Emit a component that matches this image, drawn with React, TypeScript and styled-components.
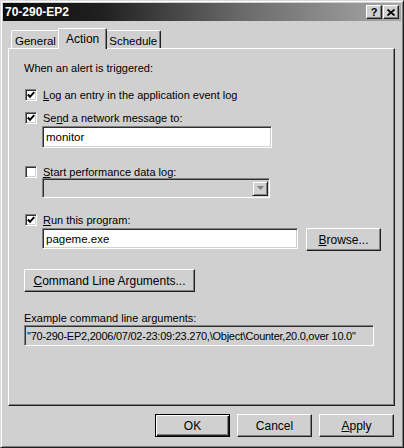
import styled, { createGlobalStyle } from "styled-components";

const FACE = "#d0d0d0";

const GlobalStyle = createGlobalStyle`
  html, body {
    margin: 0;
    padding: 0;
    background: ${FACE};
  }
  body {
    font-family: "Liberation Sans", Arial, sans-serif;
    font-size: 11px;
    color: #000;
  }
`;

const Window = styled.div`
  width: 404px;
  height: 448px;
  box-sizing: border-box;
  background: ${FACE};
  border: 1px solid;
  border-color: #d8d8d8 #202020 #202020 #d8d8d8;
  box-shadow: inset 1px 1px #fff, inset -1px -1px #808080;
  padding: 2px;
  display: flex;
  flex-direction: column;
`;

const TitleBar = styled.div`
  height: 18px;
  display: flex;
  align-items: center;
  padding: 0 2px 0 2px;
  background: linear-gradient(90deg, #0c0c0c 0%, #202020 25%, #6a6a6a 60%, #a8a8a8 100%);
`;

const Title = styled.div`
  flex: 1;
  color: #fff;
  font-weight: bold;
  font-size: 12px;
`;

const CaptionButton = styled.div<{ $gap?: number }>`
  width: 16px;
  height: 14px;
  box-sizing: border-box;
  margin-left: ${(p) => p.$gap ?? 0}px;
  background: ${FACE};
  border: 1px solid;
  border-color: #fff #202020 #202020 #fff;
  box-shadow: inset -1px -1px #808080;
  display: flex;
  align-items: center;
  justify-content: center;
  font-weight: bold;
  font-size: 11px;
  line-height: 1;
`;

const Body = styled.div`
  flex: 1;
  display: flex;
  flex-direction: column;
  padding: 8px 6px 0 5px;
`;

const TabStrip = styled.div`
  display: flex;
  align-items: flex-end;
  padding-left: 3px;
  height: 20px;
  position: relative;
  z-index: 1;
  margin-bottom: -1px;
`;

const Tab = styled.div<{ $active?: boolean }>`
  box-sizing: border-box;
  height: ${(p) => (p.$active ? 21 : 18)}px;
  padding: ${(p) => (p.$active ? "0 7px 1px 7px" : "2px 3px 0 3px")};
  margin: ${(p) => (p.$active ? "0 -2px" : "0 0 1px 0")};
  background: ${FACE};
  border-top: 1px solid #fff;
  border-left: 1px solid #fff;
  border-right: 1px solid #202020;
  border-radius: 2px 2px 0 0;
  box-shadow: inset -1px 0 #808080;
  position: relative;
  z-index: ${(p) => (p.$active ? 2 : 1)};
  display: flex;
  align-items: center;
  font-size: ${(p) => (p.$active ? 12 : 11.5)}px;
`;

const Panel = styled.div`
  height: 358px;
  box-sizing: border-box;
  border: 1px solid;
  border-color: #fff #202020 #202020 #fff;
  box-shadow: inset -1px -1px #808080;
  padding: 13px 0 0 15px;
  display: flex;
  flex-direction: column;
  align-items: flex-start;
`;

const Caption = styled.div<{ $mt?: number }>`
  margin-top: ${(p) => p.$mt ?? 0}px;
  line-height: 13px;
  height: 13px;
`;

const CheckRow = styled.div<{ $mt: number }>`
  margin-top: ${(p) => p.$mt}px;
  height: 13px;
  display: flex;
  align-items: center;
  gap: 6px;
  padding-left: 1px;
`;

const Box = styled.div`
  width: 12px;
  height: 12px;
  box-sizing: border-box;
  background: #fff;
  border: 1px solid;
  border-color: #808080 #fff #fff #808080;
  box-shadow: inset 1px 1px #303030, inset -1px -1px ${FACE};
  display: flex;
  align-items: center;
  justify-content: center;
`;

const Indented = styled.div<{ $mt: number }>`
  margin-top: ${(p) => p.$mt}px;
  margin-left: 18px;
  display: flex;
  gap: 8px;
`;

const Field = styled.div<{ $w: number; $h: number; $disabled?: boolean; $tight?: boolean }>`
  width: ${(p) => p.$w}px;
  height: ${(p) => p.$h}px;
  box-sizing: border-box;
  background: ${(p) => (p.$disabled ? FACE : "#fff")};
  border: 1px solid;
  border-color: #808080 #fff #fff #808080;
  box-shadow: inset 1px 1px #303030, inset -1px -1px ${FACE};
  display: flex;
  align-items: center;
  padding: 0 ${(p) => (p.$tight ? 2 : 3)}px;
  white-space: nowrap;
  overflow: hidden;
  font-size: ${(p) => (p.$tight ? 11 : 11.5)}px;
  letter-spacing: ${(p) => (p.$tight ? "-0.25px" : "0")};
`;

const ComboArrow = styled.div`
  margin-left: auto;
  margin-right: -2px;
  width: 16px;
  height: 15px;
  box-sizing: border-box;
  background: ${FACE};
  border: 1px solid;
  border-color: ${FACE} #202020 #202020 ${FACE};
  box-shadow: inset 1px 1px #fff, inset -1px -1px #808080;
  display: flex;
  align-items: center;
  justify-content: center;
`;

const Button = styled.div<{ $w: number; $default?: boolean; $mt?: number }>`
  width: ${(p) => p.$w}px;
  height: 23px;
  margin-top: ${(p) => p.$mt ?? 0}px;
  box-sizing: border-box;
  background: ${FACE};
  border: 1px solid;
  border-color: ${(p) =>
    p.$default ? "#000" : "#fff #202020 #202020 #fff"};
  box-shadow: ${(p) =>
    p.$default
      ? "inset 1px 1px #fff, inset -1px -1px #202020, inset -2px -2px #808080"
      : "inset -1px -1px #808080"};
  display: flex;
  align-items: center;
  justify-content: center;
  font-size: 12px;
`;

const Footer = styled.div`
  display: flex;
  justify-content: flex-end;
  gap: 7px;
  margin-top: 8px;
  padding-right: 1px;
`;

function Check({ on }: { on: boolean }) {
  return (
    <Box>
      {on && (
        <svg width="8" height="8" viewBox="0 0 8 8">
          <path d="M0.8 3.5 L3 5.8 L7.2 1.2" stroke="#000" strokeWidth="2" fill="none" />
        </svg>
      )}
    </Box>
  );
}

export default function App() {
  return (
    <>
      <GlobalStyle />
      <Window>
        <TitleBar>
          <Title>70-290-EP2</Title>
          <CaptionButton>?</CaptionButton>
          <CaptionButton $gap={1}>
            <svg width="8" height="7" viewBox="0 0 8 7">
              <path d="M0.5 0.5 L7.5 6.5 M7.5 0.5 L0.5 6.5" stroke="#000" strokeWidth="1.7" />
            </svg>
          </CaptionButton>
        </TitleBar>
        <Body>
          <TabStrip>
            <Tab>General</Tab>
            <Tab $active>Action</Tab>
            <Tab>Schedule</Tab>
          </TabStrip>
          <Panel>
            <Caption>When an alert is triggered:</Caption>
            <CheckRow $mt={13}>
              <Check on />
              <span>
                <u>L</u>og an entry in the application event log
              </span>
            </CheckRow>
            <CheckRow $mt={10}>
              <Check on />
              <span>
                Se<u>n</u>d a network message to:
              </span>
            </CheckRow>
            <Indented $mt={2}>
              <Field $w={230} $h={22}>monitor</Field>
            </Indented>
            <CheckRow $mt={17}>
              <Check on={false} />
              <span>
                <u>S</u>tart performance data log:
              </span>
            </CheckRow>
            <Indented $mt={0}>
              <Field $w={228} $h={20} $disabled>
                <ComboArrow>
                  <svg width="7" height="4" viewBox="0 0 7 4">
                    <path d="M0 0 H7 L3.5 4 Z" fill="#808080" />
                  </svg>
                </ComboArrow>
              </Field>
            </Indented>
            <CheckRow $mt={15}>
              <Check on />
              <span>
                <u>R</u>un this program:
              </span>
            </CheckRow>
            <Indented $mt={2}>
              <Field $w={256} $h={21}>pageme.exe</Field>
              <Button $w={75}>
                <span>
                  <u>B</u>rowse...
                </span>
              </Button>
            </Indented>
            <Button $w={171} $mt={18}>
              <span>
                <u>C</u>ommand Line Arguments...
              </span>
            </Button>
            <Caption $mt={20}>Example command line arguments:</Caption>
            <Field $w={350} $h={21} $disabled $tight>
              "70-290-EP2,2006/07/02-23:09:23.270,\Object\Counter,20.0,over 10.0"
            </Field>
          </Panel>
          <Footer>
            <Button $w={75} $default>
              OK
            </Button>
            <Button $w={75}>Cancel</Button>
            <Button $w={75}>
              <span>
                <u>A</u>pply
              </span>
            </Button>
          </Footer>
        </Body>
      </Window>
    </>
  );
}
